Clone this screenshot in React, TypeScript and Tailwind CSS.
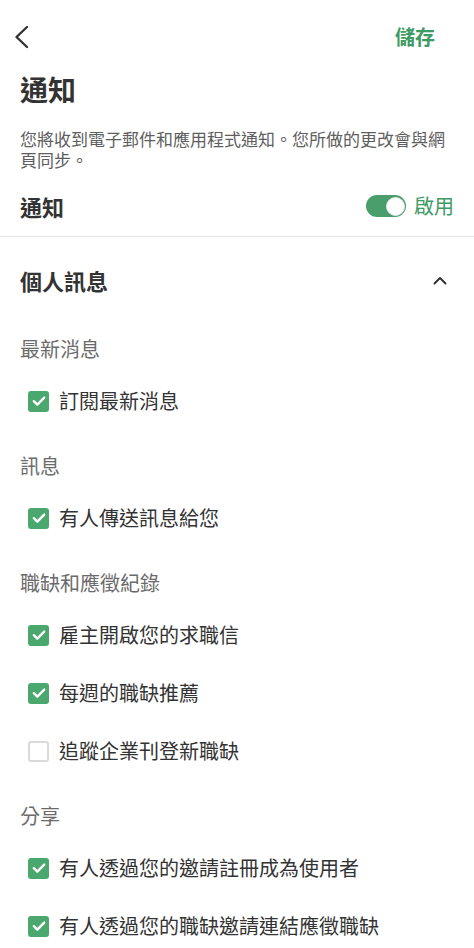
import { useState } from "react";

/* ─── Data ─── */
type Item = { label: string; checked: boolean };
type Group = { title: string; items: Item[] };

const groups: Group[] = [
  { title: "最新消息", items: [{ label: "訂閱最新消息", checked: true }] },
  { title: "訊息", items: [{ label: "有人傳送訊息給您", checked: true }] },
  {
    title: "職缺和應徵紀錄",
    items: [
      { label: "雇主開啟您的求職信", checked: true },
      { label: "每週的職缺推薦", checked: true },
      { label: "追蹤企業刊登新職缺", checked: false },
    ],
  },
  {
    title: "分享",
    items: [
      { label: "有人透過您的邀請註冊成為使用者", checked: true },
      { label: "有人透過您的職缺邀請連結應徵職缺", checked: true },
    ],
  },
];

/* ─── Checkbox row ─── */
function CheckRow({ item }: { item: Item }) {
  const [checked, setChecked] = useState(item.checked);
  return (
    <button
      type="button"
      onClick={() => setChecked((c) => !c)}
      className="flex h-[58px] items-center gap-[10px] pl-[28px] text-left"
    >
      {checked ? (
        <span className="flex h-[21px] w-[21px] shrink-0 items-center justify-center rounded-[3px] bg-[#4aa76d]">
          <svg width="16" height="16" viewBox="0 0 16 16" fill="none">
            <path d="M2.8 8.2l3.5 3.4L13.2 4.6" stroke="white" strokeWidth="2.4" strokeLinecap="round" strokeLinejoin="round" />
          </svg>
        </span>
      ) : (
        <span className="h-[21px] w-[21px] shrink-0 rounded-[3px] border-2 border-[#dadada] bg-white" />
      )}
      <span className="text-[20px] leading-none text-[#333]">{item.label}</span>
    </button>
  );
}

/* ─── Page ─── */
export default function App() {
  const [enabled, setEnabled] = useState(true);

  return (
    <div
      className="min-h-screen w-full bg-white text-[#333]"
      style={{ fontFamily: '"Noto Sans CJK TC", "Noto Sans", sans-serif' }}
    >
      {/* Top bar */}
      <div className="flex h-[74px] items-center justify-between pl-[13px] pr-[39px]">
        <svg width="17" height="24" viewBox="0 0 17 24" fill="none">
          <path d="M14 2L3.5 12 14 22" stroke="#333" strokeWidth="2.4" strokeLinecap="round" strokeLinejoin="round" />
        </svg>
        <span className="text-[20px] font-bold text-[#3e9b63]">儲存</span>
      </div>

      {/* Header + master toggle */}
      <div className="border-b border-[#e6e6e6] px-5 pb-[8px]">
        <h1 className="h-[30px] text-[28px] font-bold leading-[30px]">通知</h1>
        <p className="mt-[24px] text-[17px] leading-[21px] text-[#5e5e5e]">
          您將收到電子郵件和應用程式通知。您所做的更改會與網頁同步。
        </p>
        <div className="mt-[14px] flex h-[44px] items-center justify-between">
          <span className="text-[22px] font-bold">通知</span>
          <button type="button" onClick={() => setEnabled((e) => !e)} className="flex items-center gap-2">
            <span
              className={
                enabled
                  ? "relative h-[22px] w-[40px] rounded-full bg-[#4a9e6b]"
                  : "relative h-[22px] w-[40px] rounded-full bg-[#cfcfcf]"
              }
            >
              <span
                className={
                  enabled
                    ? "absolute right-[1.5px] top-[1.5px] h-[19px] w-[19px] rounded-full border border-[#e8e8e8] bg-white"
                    : "absolute left-[1.5px] top-[1.5px] h-[19px] w-[19px] rounded-full border border-[#e8e8e8] bg-white"
                }
              />
            </span>
            <span className="text-[20px] text-[#3e9b63]">啟用</span>
          </button>
        </div>
      </div>

      {/* Personal section */}
      <div className="flex h-[86px] items-center justify-between pl-5 pr-[27px]">
        <span className="text-[22px] font-bold">個人訊息</span>
        <svg width="14" height="9" viewBox="0 0 14 9" fill="none">
          <path d="M1.5 7.5L7 2l5.5 5.5" stroke="#333" strokeWidth="2" strokeLinecap="round" strokeLinejoin="round" />
        </svg>
      </div>

      <div className="flex flex-col gap-[13px] pt-[3px]">
        {groups.map((g) => (
          <div key={g.title} className="flex flex-col">
            <div className="flex h-[46px] items-center px-5 text-[20px] text-[#6b6b6b]">{g.title}</div>
            {g.items.map((it) => (
              <CheckRow key={it.label} item={it} />
            ))}
          </div>
        ))}
      </div>
    </div>
  );
}
